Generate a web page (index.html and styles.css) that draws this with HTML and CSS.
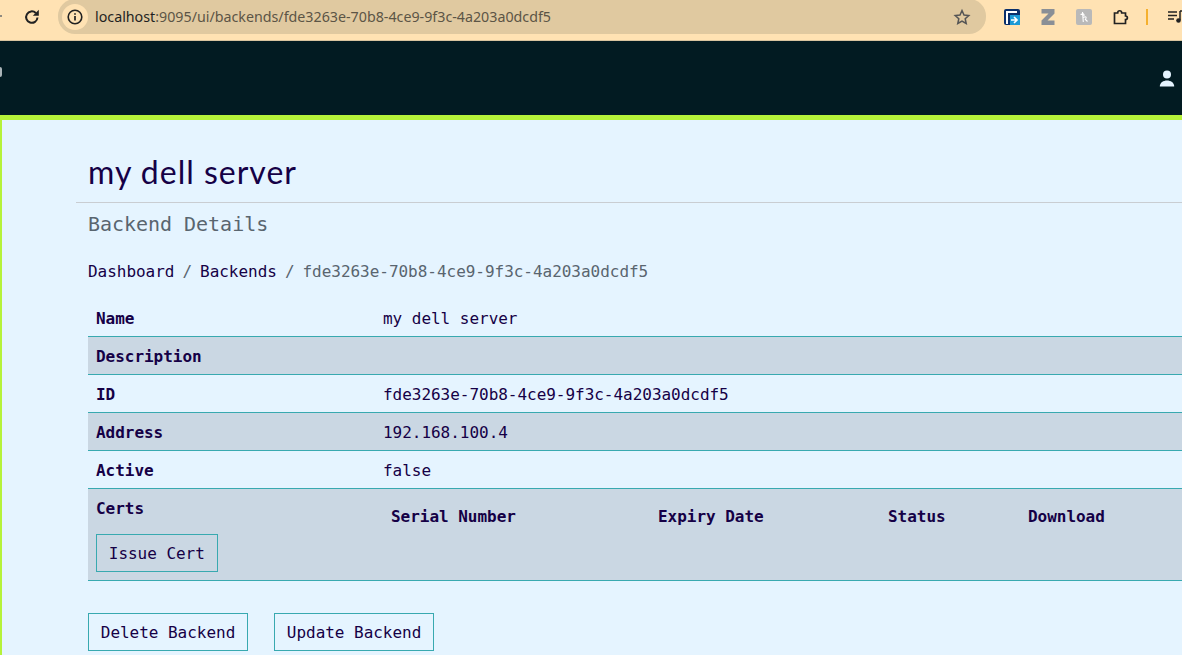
FILE: index.html
```html
<!DOCTYPE html>
<html lang="en">
<head>
  <meta charset="UTF-8">
  <title>my dell server</title>
  <link rel="stylesheet" href="styles.css">
</head>
<body>

  <!-- Browser toolbar -->
  <div class="toolbar">
    <span class="back-edge"></span>
    <svg class="reload" width="16" height="16" viewBox="0 0 16 16"><path d="M13.500 8.500a5.700 5.700 0 1 1-1.700-4.500" fill="none" stroke="#222" stroke-width="2"/><path d="M14.800 .8v6H8.800z" fill="#222"/></svg>
    <div class="address">
      <span class="site-info">
        <svg width="16" height="16" viewBox="0 0 16 16"><circle cx="8" cy="8" r="6.800" fill="none" stroke="#222" stroke-width="1.600"/><path d="M8 7v4.500M8 4.300v1.500" stroke="#222" stroke-width="1.700"/></svg>
      </span>
      <span class="url"><span class="host">localhost</span>:9095/ui/backends/fde3263e-70b8-4ce9-9f3c-4a203a0dcdf5</span>
      <svg class="star" width="18" height="18" viewBox="0 0 18 18"><path d="M9 2.500l2 4.500 4.800.5-3.600 3.200 1 4.800L9 13l-4.200 2.500 1-4.800-3.600-3.200L7 7z" fill="none" stroke="#555" stroke-width="1.500"/></svg>
    </div>
    <div class="extensions">
      <svg width="16" height="16" viewBox="0 0 16 16"><rect width="16" height="16" rx="2" fill="#0a2f6b"/><path d="M3 15V3h10" fill="none" stroke="#fff" stroke-width="2"/><rect x="6" y="6" width="10" height="10" fill="#1b9ad6"/><path d="M7 11h5M10 8l3 3-3 3" fill="none" stroke="#fff" stroke-width="1.600"/></svg>
      <svg width="16" height="16" viewBox="0 0 16 16"><path d="M1.500 0h13v4.500L7.500 11.500h7V16h-13v-4.500l7-7h-7z" fill="#8a8f96"/></svg>
      <svg width="16" height="16" viewBox="0 0 16 16"><rect width="16" height="16" rx="2" fill="#b9b9b9"/><path d="M6.500 3l.8 10M4.500 5.500c3-1 4-1 3.500 1.500M7.500 8.500c2-1.500 3.500-.5 2 1.500M9 10l2.500 2.500" fill="none" stroke="#fff" stroke-width="1.100"/></svg>
      <svg width="18" height="18" viewBox="0 0 18 18"><path d="M2.500 5h3.200c0-3 4-3 4 0h3.800v3c2.500 0 2.500 3.500 0 3.500v4h-11z" fill="none" stroke="#222" stroke-width="1.700"/></svg>
      <span class="divider"></span>
      <svg width="16" height="16" viewBox="0 0 16 16"><path d="M0 3h9M0 6.500h9M0 10h6" stroke="#222" stroke-width="1.500"/><path d="M12 2v9" stroke="#222" stroke-width="1.500"/><path d="M12 2h4" stroke="#222" stroke-width="1.500"/><circle cx="10.500" cy="11.500" r="2.300" fill="#222"/></svg>
    </div>
  </div>

  <!-- App header -->
  <header class="app-header">
    <span class="logo-edge"></span>
    <svg class="user-icon" width="16" height="17" viewBox="0 0 16 17"><circle cx="8" cy="4.500" r="4" fill="#e5f4ff"/><path d="M.8 16.500c0-8 14.400-8 14.400 0z" fill="#e5f4ff"/></svg>
  </header>

  <main class="page">
    <h1 class="title">my dell server</h1>
    <div class="subtitle">Backend Details</div>

    <nav class="crumbs">
      <a>Dashboard</a><span class="sep">/</span><a>Backends</a><span class="sep">/</span><span class="current">fde3263e-70b8-4ce9-9f3c-4a203a0dcdf5</span>
    </nav>

    <table class="details">
      <tr><th>Name</th><td>my dell server</td></tr>
      <tr><th>Description</th><td></td></tr>
      <tr><th>ID</th><td>fde3263e-70b8-4ce9-9f3c-4a203a0dcdf5</td></tr>
      <tr><th>Address</th><td>192.168.100.4</td></tr>
      <tr><th>Active</th><td>false</td></tr>
      <tr class="certs-row">
        <th>
          <div class="certs-label">Certs</div>
          <button class="btn">Issue Cert</button>
        </th>
        <td>
          <div class="certs-head">
            <span class="col-serial">Serial Number</span>
            <span class="col-expiry">Expiry Date</span>
            <span class="col-status">Status</span>
            <span>Download</span>
          </div>
        </td>
      </tr>
    </table>

    <div class="actions">
      <button class="btn">Delete Backend</button>
      <button class="btn">Update Backend</button>
    </div>
  </main>

</body>
</html>
```

FILE: styles.css
```css
html, body {
  height: 100%;
}

body {
  margin: 0;
  overflow: hidden;
  background-color: #e5f4ff;
  color: #150046;
  font-family: "DejaVu Sans Mono", monospace;
  font-size: 16px;
  letter-spacing: -0.03px;
}

/* browser toolbar */
.toolbar {
  position: relative;
  display: flex;
  align-items: center;
  height: 41px;
  box-sizing: border-box;
  border-bottom: 1px solid #d8c4a0;
  background-color: #ffe2b3;
  padding: 0 0 7px 24px;
}

.back-edge {
  position: absolute;
  left: 0;
  top: 15px;
  width: 2px;
  height: 2px;
  background-color: #8f8a80;
}

.reload {
  flex: none;
}

.address {
  display: flex;
  align-items: center;
  flex: none;
  width: 928px;
  height: 35px;
  margin-left: 18px;
  box-sizing: border-box;
  padding: 0 15px 0 4px;
  border-radius: 17px;
  background-color: #e0c9a0;
}

.site-info {
  display: flex;
  align-items: center;
  justify-content: center;
  width: 26px;
  height: 26px;
  border-radius: 50%;
  background-color: #ffe2b3;
}

.url {
  margin-left: 7px;
  flex: 1;
  font-family: "Noto Sans", sans-serif;
  font-size: 14.25px;
  letter-spacing: 0;
  color: #5c5546;
}

.host {
  color: #1f1f1f;
}

.extensions {
  display: flex;
  align-items: center;
  gap: 20px;
  margin-left: 18px;
}

.divider {
  width: 2px;
  height: 16px;
  margin: 0 0 0 -4px;
  background-color: #f5b02e;
}

/* app header */
.app-header {
  position: relative;
  display: flex;
  align-items: center;
  justify-content: flex-end;
  height: 74px;
  padding-right: 7px;
  background-color: #021b22;
  border-bottom: 5px solid #b5f23a;
}

.logo-edge {
  position: absolute;
  left: 0;
  top: 26px;
  width: 2px;
  height: 10px;
  border-radius: 0 2px 2px 0;
  background-color: #aab4b8;
}

/* page */
.page {
  box-sizing: border-box;
  height: 535px;
  padding: 31px 0 0 74px;
  border-left: 2px solid #b5f23a;
}

.title {
  margin: 0;
  padding: 0 0 9px 12px;
  border-bottom: 1px solid #c9cdd2;
  font-family: Lato, sans-serif;
  font-size: 32px;
  line-height: 42px;
  font-weight: 400;
  letter-spacing: 1px;
}

.subtitle {
  margin: 8px 0 0 12px;
  font-size: 20px;
  line-height: 26px;
  color: #59656f;
}

.crumbs {
  margin: 23px 0 0 12px;
  line-height: 24px;
}

.sep {
  margin: 0 8px;
  color: #59656f;
}

.current {
  color: #59656f;
}

.details {
  width: 1094px;
  margin: 15px 0 0 12px;
  border-collapse: separate;
  border-spacing: 0;
}

.details th, .details td {
  height: 36px;
  padding: 1px 8px 0;
  border-bottom: 1px solid #38a9b0;
  text-align: left;
  vertical-align: middle;
}

.details th {
  width: 271px;
  font-weight: 700;
}

.details tr:nth-child(even) {
  background-color: #cad7e3;
}

.details .certs-row th, .details .certs-row td {
  height: 90px;
  vertical-align: top;
}

.certs-label {
  margin-top: 7px;
  line-height: 24px;
}

.certs-head {
  display: flex;
  margin: 15px 0 0 8px;
  line-height: 24px;
  font-weight: 700;
}

.col-serial {
  width: 267px;
}

.col-expiry {
  width: 230px;
}

.col-status {
  width: 140px;
}

.btn {
  height: 38px;
  padding: 0 11.8px;
  border: 1px solid #38a9b0;
  background: transparent;
  color: #150046;
  font-family: inherit;
  font-size: 16px;
  font-weight: 400;
  letter-spacing: inherit;
}

.certs-row .btn {
  display: block;
  margin-top: 13px;
}

.actions {
  display: flex;
  gap: 26px;
  margin: 32px 0 0 12px;
}
```
